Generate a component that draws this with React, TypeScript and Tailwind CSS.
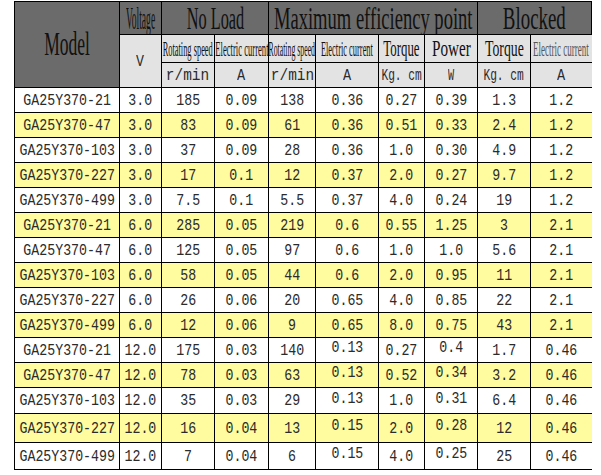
import React from 'react'

const cols = [
  'w-[105px]',
  'w-[42px]',
  'w-[53px]',
  'w-[54px]',
  'w-[47px]',
  'w-[63px]',
  'w-[46px]',
  'w-[53px]',
  'w-[53px]',
  'w-[61px]',
]

const rows = [
  ['GA25Y370-21', '3.0', '185', '0.09', '138', '0.36', '0.27', '0.39', '1.3', '1.2'],
  ['GA25Y370-47', '3.0', '83', '0.09', '61', '0.36', '0.51', '0.33', '2.4', '1.2'],
  ['GA25Y370-103', '3.0', '37', '0.09', '28', '0.36', '1.0', '0.30', '4.9', '1.2'],
  ['GA25Y370-227', '3.0', '17', '0.1', '12', '0.37', '2.0', '0.27', '9.7', '1.2'],
  ['GA25Y370-499', '3.0', '7.5', '0.1', '5.5', '0.37', '4.0', '0.24', '19', '1.2'],
  ['GA25Y370-21', '6.0', '285', '0.05', '219', '0.6', '0.55', '1.25', '3', '2.1'],
  ['GA25Y370-47', '6.0', '125', '0.05', '97', '0.6', '1.0', '1.0', '5.6', '2.1'],
  ['GA25Y370-103', '6.0', '58', '0.05', '44', '0.6', '2.0', '0.95', '11', '2.1'],
  ['GA25Y370-227', '6.0', '26', '0.06', '20', '0.65', '4.0', '0.85', '22', '2.1'],
  ['GA25Y370-499', '6.0', '12', '0.06', '9', '0.65', '8.0', '0.75', '43', '2.1'],
  ['GA25Y370-21', '12.0', '175', '0.03', '140', '0.13', '0.27', '0.4', '1.7', '0.46'],
  ['GA25Y370-47', '12.0', '78', '0.03', '63', '0.13', '0.52', '0.34', '3.2', '0.46'],
  ['GA25Y370-103', '12.0', '35', '0.03', '29', '0.13', '1.0', '0.31', '6.4', '0.46'],
  ['GA25Y370-227', '12.0', '16', '0.04', '13', '0.15', '2.0', '0.28', '12', '0.46'],
  ['GA25Y370-499', '12.0', '7', '0.04', '6', '0.15', '4.0', '0.25', '25', '0.46'],
]

const heights = [
  'h-[25px]', 'h-[25px]', 'h-[25px]', 'h-[25px]', 'h-[25px]',
  'h-[25px]', 'h-[25px]', 'h-[25px]', 'h-[25px]', 'h-[25px]',
  'h-[25px]', 'h-[25px]', 'h-[26px]', 'h-[29px]', 'h-[27px]',
]

const units = [
  ['r/min', '[transform:scaleX(0.85)]'],
  ['A', '[transform:scaleX(0.8)]'],
  ['r/min', '[transform:scaleX(0.85)]'],
  ['A', '[transform:scaleX(0.8)]'],
  ['Kg. cm', '[transform:scaleX(0.66)]'],
  ['W', '[transform:scaleX(0.6)]'],
  ['Kg. cm', '[transform:scaleX(0.66)]'],
  ['A', '[transform:scaleX(0.8)]'],
]

// condensed text: centred even when wider than its cell, then squeezed
const T = ({ children, cls }: { children: React.ReactNode; cls: string }) => (
  <div className="flex justify-center">
    <span className={`shrink-0 whitespace-nowrap ${cls}`}>{children}</span>
  </div>
)

const serif = "font-['Liberation_Serif',serif] font-normal leading-none text-[#111]"
const mono = "font-['Liberation_Mono',monospace] font-normal text-[17px] leading-none text-[#2b2b2b]"
const cell = 'border border-black p-0 text-center align-middle overflow-hidden'

const App = () => {
  return (
    <div className="w-[601px] h-[475px] bg-white overflow-hidden">
      <table className="ml-[14px] mt-px w-[577px] table-fixed border-collapse">
        <colgroup>
          {cols.map((c, i) => (
            <col key={i} className={c} />
          ))}
        </colgroup>
        <thead>
          <tr className="h-[33px] bg-[#6b6b6b]">
            <th rowSpan={3} className={`${cell} ${serif} text-[33px]`}>
              <T cls="[transform:scaleX(0.53)]">Model</T>
            </th>
            <th className={`${cell} ${serif} text-[32px]`}>
              <T cls="[transform:scaleX(0.3)]">Voltage</T>
            </th>
            <th colSpan={2} className={`${cell} ${serif} text-[32px]`}>
              <T cls="[transform:scaleX(0.51)]">No Load</T>
            </th>
            <th colSpan={4} className={`${cell} ${serif} text-[32px]`}>
              <T cls="[transform:scaleX(0.58)]">Maximum efficiency point</T>
            </th>
            <th colSpan={2} className={`${cell} ${serif} text-[32px]`}>
              <T cls="[transform:scaleX(0.59)]">Blocked</T>
            </th>
          </tr>
          <tr className="h-[28px] bg-[#e3e3e3]">
            <th rowSpan={2} className={`${cell} ${mono}`}>
              <T cls="[transform:scaleX(0.78)]">V</T>
            </th>
            <th className={`${cell} ${serif} text-[20px]`}>
              <T cls="[transform:scaleX(0.42)]">Rotating speed</T>
            </th>
            <th className={`${cell} ${serif} text-[20px]`}>
              <T cls="[transform:scaleX(0.43)]">Electric current</T>
            </th>
            <th className={`${cell} ${serif} text-[20px]`}>
              <T cls="[transform:scaleX(0.39)]">Rotating speed</T>
            </th>
            <th className={`${cell} ${serif} text-[20px]`}>
              <T cls="[transform:scaleX(0.42)]">Electric current</T>
            </th>
            <th className={`${cell} ${serif} text-[23px]`}>
              <T cls="[transform:scaleX(0.56)]">Torque</T>
            </th>
            <th className={`${cell} ${serif} text-[23px]`}>
              <T cls="[transform:scaleX(0.66)]">Power</T>
            </th>
            <th className={`${cell} ${serif} text-[23px]`}>
              <T cls="[transform:scaleX(0.6)]">Torque</T>
            </th>
            <th className={`${cell} border-r-0 ${serif} text-[20px] text-[#555]`}>
              <T cls="[transform:scaleX(0.45)]">Electric current</T>
            </th>
          </tr>
          <tr className="h-[25px] bg-[#e3e3e3]">
            {units.map(([u, s], i) => (
              <th key={i} className={`${cell} ${mono} ${i === 7 ? 'border-r-0' : ''}`}>
                <T cls={s}>{u}</T>
              </th>
            ))}
          </tr>
        </thead>
        <tbody>
          {rows.map((r, ri) => (
            <tr key={ri} className={`${heights[ri]} ${ri % 2 === 1 ? 'bg-[#fffb9f]' : 'bg-white'}`}>
              {r.map((v, ci) => (
                <td
                  key={ci}
                  className={`${cell} ${mono} ${ci === 9 ? 'border-r-0' : ''} ${
                    ri >= 10 && (ci === 5 || ci === 7) ? 'pb-[5px]' : ''
                  }`}
                >
                  <T cls="[transform:scaleX(0.78)]">{v}</T>
                </td>
              ))}
            </tr>
          ))}
        </tbody>
      </table>
    </div>
  )
}

export default App
